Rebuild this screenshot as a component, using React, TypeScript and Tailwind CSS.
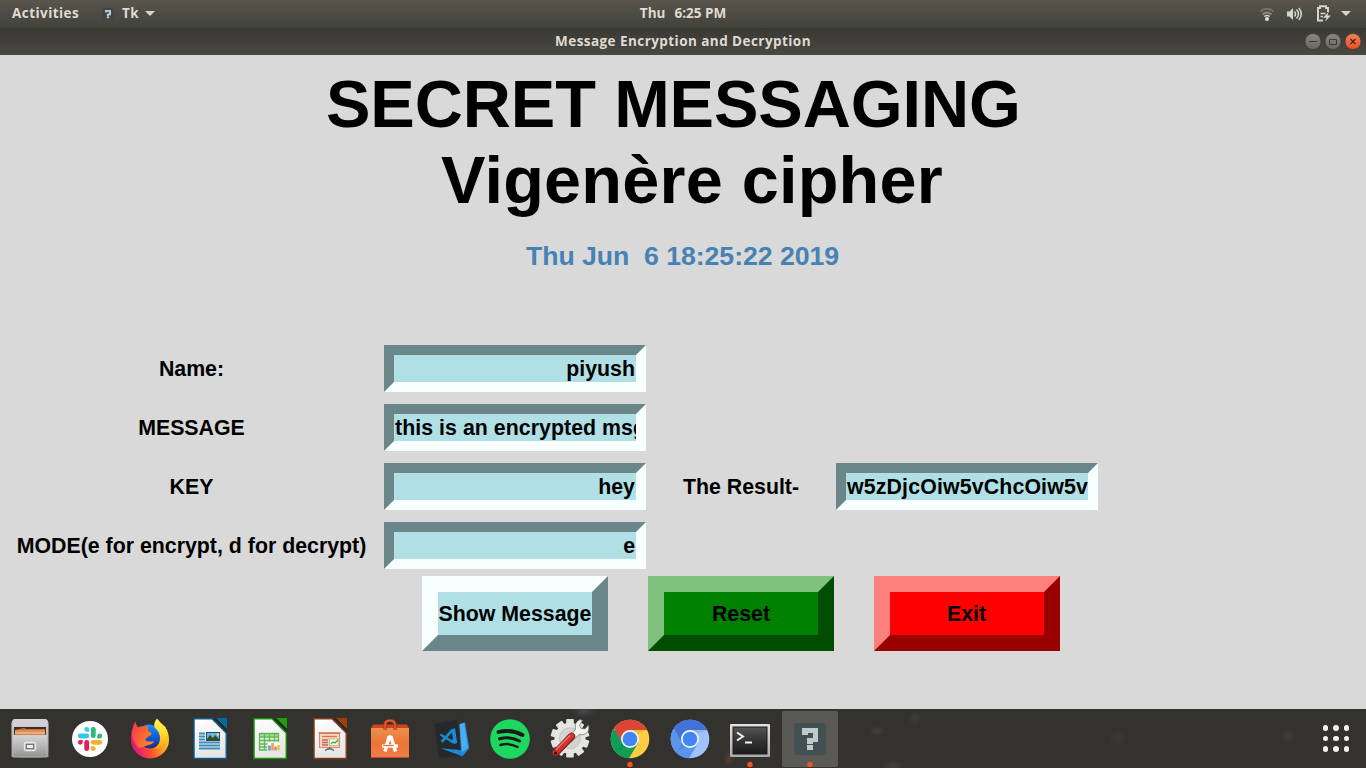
import React from 'react';

const systemFont = "font-['Open_Sans','Noto_Sans',sans-serif]";

function Caret({ className = '' }: { className?: string }) {
  return (
    <svg className={className} width="10" height="5" viewBox="0 0 10 5">
      <path d="M0 0h10L5 5z" fill="#d6d4cf" />
    </svg>
  );
}

function Unknown({ size }: { size: number }) {
  return (
    <svg width={size} height={size} viewBox="0 0 32 32">
      <rect width="32" height="32" rx="4" fill="#3b4749" />
      <path d="M8 5h16v14h-5v2h-6v-6h5v-5h-4v2H8zM13 22h6v5h-6z" fill="#c0cacc" />
    </svg>
  );
}

function TopBar() {
  return (
    <header className={`grid h-7 grid-cols-3 items-center bg-linear-to-b from-[#58554c] to-[#42413b] pb-px text-[13.5px] font-bold text-[#dfdbd2] ${systemFont}`}>
      <div className="flex items-center pl-3">
        <span className="w-[90px] tracking-[0.45px]">Activities</span>
        <Unknown size={12} />
        <span className="ml-2 w-[23px] tracking-[0.4px]">Tk</span>
        <Caret />
      </div>
      <div className="flex justify-center gap-[9px]">
        <span>Thu</span>
        <span>6:25 PM</span>
      </div>
      <div className="flex items-center justify-end pr-[15px]">
        <svg width="14" height="14" viewBox="0 0 14 14" fill="none" strokeWidth="1.9">
          <path d="M.5 4.500Q7-.8 13.500 4.500" stroke="#77746c" />
          <path d="M2.500 7.500Q7 3.500 11.500 7.500" stroke="#8d8a81" />
          <path d="M4.300 9.500Q7 7.500 9.700 9.500" stroke="#d6d4cf" strokeWidth="1.300" />
          <circle cx="7" cy="12" r="2" fill="#e0ded8" />
        </svg>
        <svg className="ml-[12px]" width="17" height="14" viewBox="0 0 17 14" fill="none" stroke="#d6d4cf">
          <path d="M1 4.500h2.500L7 1v12L3.500 9.500H1z" fill="#d6d4cf" stroke="none" />
          <path d="M8.500 4.500q2 2.500 0 5M10.500 2.500q4 4.500 0 9M12.800 1q5 6 0 12" strokeWidth="1.500" />
        </svg>
        <svg className="ml-[13px]" width="16" height="17" viewBox="0 0 16 17" fill="none" stroke="#d6d4cf">
          <path d="M7 15.500H2V3h2V1.200h6V3h2v4" strokeWidth="2" />
          <path d="M4.500 8.500h5M4.500 11.500h2.500" strokeWidth="1.400" />
          <path d="M12.500 7L7 12.800h3.500L9 16.500l6-6h-3.500z" fill="#d6d4cf" stroke="none" />
        </svg>
        <Caret className="ml-[9px]" />
      </div>
    </header>
  );
}

function TitleBar() {
  return (
    <div className={`grid h-[27px] grid-cols-[1fr_auto_1fr] items-center bg-linear-to-b from-[#393933] to-[#4b4842] ${systemFont}`}>
      <span />
      <h2 className="pb-px text-[13.5px] font-bold tracking-[0.44px] text-[#dfdbd2]">Message Encryption and Decryption</h2>
      <svg className="mr-[4px] justify-self-end" width="58" height="18" viewBox="0 0 58 18" fill="none">
        <defs>
          <linearGradient id="grayButton" x2="0" y2="1">
            <stop stopColor="#8b887f" />
            <stop offset="1" stopColor="#68665f" />
          </linearGradient>
          <linearGradient id="closeButton" x2="0" y2="1">
            <stop stopColor="#f5815d" />
            <stop offset="1" stopColor="#e6501e" />
          </linearGradient>
        </defs>
        <circle cx="9" cy="8.500" r="8" fill="url(#grayButton)" stroke="#33322e" strokeWidth=".6" />
        <circle cx="29" cy="8.500" r="8" fill="url(#grayButton)" stroke="#33322e" strokeWidth=".6" />
        <circle cx="49" cy="8.500" r="8" fill="url(#closeButton)" stroke="#33322e" strokeWidth=".6" />
        <path d="M5 8.500h8M25.500 6.500h7v5h-7z" stroke="#3c3b37" />
        <path d="M46.500 6l5 5M51.500 6l-5 5" stroke="#4a251a" strokeWidth="1.300" />
      </svg>
    </div>
  );
}

function Label({ children, shifted }: { children: React.ReactNode; shifted?: boolean }) {
  return <label className={`pt-[2px] text-center whitespace-pre ${shifted ? '' : 'pr-px'}`}>{children}</label>;
}

function Entry({ value, align = 'right', tracking = '' }: { value: string; align?: 'left' | 'right'; tracking?: string }) {
  return (
    <div className="h-[47px] border-10 border-t-[#6a8689] border-r-[#f7ffff] border-b-[#f7ffff] border-l-[#6a8689] bg-[#b0e0e6]">
      <div className={`h-[27px] overflow-hidden px-px leading-[29px] whitespace-nowrap ${tracking} ${align === 'right' ? 'text-right' : 'text-left'}`}>{value}</div>
    </div>
  );
}

function BevelButton({ children, tone }: { children: string; tone: string }) {
  return (
    <button className={`flex h-[75px] w-[186px] items-center justify-center border-16 pt-[2px] whitespace-nowrap ${tone}`}>
      {children}
    </button>
  );
}

function CipherForm() {
  return (
    <main className="h-[654px] bg-[#d9d9d9] pt-[11px] font-['Liberation_Sans',Arial,sans-serif] text-[21.333px] font-bold text-black">
      <h1 className="text-[66.667px] leading-[76px] whitespace-pre">
        <span className="block pl-[326px] tracking-[-0.1px]">SECRET MESSAGING</span>
        <span className="block pl-[441px] tracking-[0.2px]">Vigenère cipher</span>
      </h1>
      <p className="mt-[23px] pr-px text-center text-[26.667px] leading-[30px] tracking-[-0.04px] whitespace-pre text-[#4682b4]">Thu Jun  6 18:25:22 2019</p>
      <div className="mt-[74px] grid grid-cols-[384px_262px_190px_262px] items-center gap-y-3">
        <Label>Name:</Label>
        <Entry value="piyush" />
        <span className="col-span-2" />
        <Label>MESSAGE</Label>
        <Entry value="this is an encrypted msg" align="left" tracking="tracking-[0.04px]" />
        <span className="col-span-2" />
        <Label>KEY</Label>
        <Entry value="hey" />
        <Label shifted>The Result-</Label>
        <Entry value="w5zDjcOiw5vChcOiw5v" align="left" tracking="tracking-[0.14px]" />
        <Label>MODE(e for encrypt, d for decrypt)</Label>
        <Entry value="e" />
      </div>
      <div className="mt-[7px] flex gap-10 pl-[422px]">
        <BevelButton tone="border-t-[#f7ffff] border-r-[#6a8689] border-b-[#6a8689] border-l-[#f7ffff] bg-[#b0e0e6]">Show Message</BevelButton>
        <BevelButton tone="border-t-[#7fc07f] border-r-[#004c00] border-b-[#004c00] border-l-[#7fc07f] bg-[#008000]">Reset</BevelButton>
        <BevelButton tone="border-t-[#ff7f7f] border-r-[#990000] border-b-[#990000] border-l-[#ff7f7f] bg-[#ff0000] pr-px">Exit</BevelButton>
      </div>
    </main>
  );
}

function DockItem({ children, running, active }: { children: React.ReactNode; running?: boolean; active?: boolean }) {
  return (
    <svg width="60" height="59" viewBox="0 0 60 59" fill="none">
      {active && <rect x="2" y="2" width="56" height="56" rx="2" fill="#5a5955" />}
      {children}
      {running && <circle cx="30" cy="55.500" r="2.700" fill="#f25420" />}
    </svg>
  );
}

function Sheet({ id, color, fold }: { id: string; color: string; fold: string }) {
  return (
    <>
      <defs>
        <linearGradient id={id} x2=".3" y2="1">
          <stop stopColor="#fff" />
          <stop offset="1" stopColor="#e6e6e6" />
        </linearGradient>
      </defs>
      <path d="M14 9.700h18L46.300 24v25.500H14z" fill={`url(#${id})`} stroke={color} strokeWidth="1.500" />
      <path d="M36 9h11v11z" fill={fold} />
      <path d="M33 9h3l11 11v3.500z" fill="#292a26" />
    </>
  );
}

function Files() {
  return (
    <DockItem>
      <defs>
        <linearGradient id="cabinet" x2="0" y2="1">
          <stop stopColor="#d4d3d5" />
          <stop offset=".5" stopColor="#b9b8b8" />
          <stop offset="1" stopColor="#929291" />
        </linearGradient>
      </defs>
      <path d="M14 10h32q2 1 2.500 4v34q-18 1-37 0V14q.5-3 2.500-4z" fill="url(#cabinet)" />
      <path d="M14 11h32l2 6H12z" fill="#d3cfd4" />
      <path d="M14 18h32v8H14z" fill="#38322e" />
      <path d="M15 21l9-2 2 1h19v6H15z" fill="#d36a28" />
      <path d="M15 22h30" stroke="#f4b06d" />
      <path d="M15 24h30" stroke="#fff0d6" />
      <path d="M13 26h34v22H13z" fill="url(#cabinet)" stroke="#c8c8c8" strokeWidth=".6" />
      <rect x="24.500" y="33.500" width="11" height="8" rx="1.500" fill="#aaa" stroke="#e8e8e8" strokeWidth="1.300" />
      <rect x="26.500" y="35.500" width="7" height="4" fill="#eee" stroke="#777" />
    </DockItem>
  );
}

function Slack() {
  return (
    <DockItem>
      <circle cx="30" cy="30" r="18" fill="#fff" />
      <g strokeWidth="4.800" strokeLinecap="round">
        <path d="M20.300 27h6.400" stroke="#36c5f0" />
        <path d="M33.300 20.300v6.400" stroke="#2eb67d" />
        <path d="M33.300 33.300h6.400" stroke="#ecb22e" />
        <path d="M26.700 33.300v6.400" stroke="#e01e5a" />
      </g>
      <path d="M29.100 22.700h-2.400a2.400 2.400 0 1 1 2.400-2.400z" fill="#36c5f0" />
      <path d="M37.300 29.400V27a2.400 2.400 0 1 1 2.400 2.400z" fill="#2eb67d" />
      <path d="M30.900 37.300h2.400a2.400 2.400 0 1 1-2.400 2.400z" fill="#ecb22e" />
      <path d="M22.700 30.900v2.400a2.400 2.400 0 1 1-2.400-2.400z" fill="#e01e5a" />
    </DockItem>
  );
}

function Firefox() {
  return (
    <DockItem>
      <defs>
        <linearGradient id="foxBody" x1="1" y1=".2" x2=".05" y2=".5">
          <stop stopColor="#ffd52f" />
          <stop offset=".3" stopColor="#ffa421" />
          <stop offset=".65" stopColor="#ff5030" />
          <stop offset="1" stopColor="#e01b7a" />
        </linearGradient>
        <linearGradient id="globe" x2="0" y2="1">
          <stop stopColor="#1a94e8" />
          <stop offset=".5" stopColor="#0b62dc" />
          <stop offset="1" stopColor="#1b2f9c" />
        </linearGradient>
        <linearGradient id="foxHead" x2="1" y2=".6">
          <stop stopColor="#f9324c" />
          <stop offset="1" stopColor="#ff8a22" />
        </linearGradient>
        <linearGradient id="foxFlame" x2="0" y2="1">
          <stop stopColor="#fff45c" />
          <stop offset=".5" stopColor="#ffdb2e" />
          <stop offset="1" stopColor="#ff9a1e" />
        </linearGradient>
      </defs>
      <circle cx="29" cy="27" r="11.500" fill="url(#globe)" />
      <path d="M15.500 13Q10.500 21 11 31A19 18.500 0 0 0 49 31Q49 23 45 18L40 24Q43 38 30 39.500 21 39 19 30z" fill="url(#foxBody)" />
      <path d="M15.500 13Q16 16.500 18 18.500 21 16.500 24 17.500L29 16.800Q27 19.500 28 22L31.500 24Q31.500 26.500 27.500 28L25 31Q28 33.500 34 32 33 35.500 28 36 24 38 19 39 10 30 12.500 21 13 16.500 15.500 13z" fill="url(#foxHead)" />
      <path d="M37 9.500Q33.500 13 34.500 18.500 39.500 22 40 29 40 36 34 39.500 44 41 47 33 49.500 25 45 17.500 43 16 40.500 13.500z" fill="url(#foxFlame)" />
    </DockItem>
  );
}

function Writer() {
  return (
    <DockItem>
      <Sheet id="writerPage" color="#0c5d91" fold="#0369a3" />
      <path d="M19 24.500h6M19 27.500h6M19 30.500h6M19 33.500h21M19 36.500h21M19 39.500h21" stroke="#3c8fbd" strokeWidth="1.900" />
      <rect x="26.500" y="23.500" width="13" height="8" fill="#69b7e7" stroke="#224b60" />
      <path d="M27 30l3-4 3 3 2-3 4 4v1.500H27z" fill="#354e28" />
      <circle cx="38" cy="25.500" r="1.200" fill="#ffe45b" />
    </DockItem>
  );
}

function Calc() {
  return (
    <DockItem>
      <Sheet id="calcPage" color="#159304" fold="#18a303" />
      <rect x="19" y="24" width="20" height="17" fill="#dff5d7" />
      <path d="M19 24h20v3.500H19z" fill="#a5db98" />
      <path d="M19 24.500h20M19 28h20M19 31.500h20M19 35h20M19 38h20M19 41h20M19.500 24v17M24.500 24v17M29.500 24v17M34.500 24v17M38.500 24v17" stroke="#62b653" strokeWidth="1.300" />
      <rect x="27.500" y="33" width="13" height="9" fill="#fff" stroke="#ddd" strokeWidth=".6" />
      <path d="M29.500 41.500v-5" stroke="#579fd8" strokeWidth="2.600" />
      <path d="M32.500 41.500v-7.500" stroke="#f59b44" strokeWidth="2.600" />
      <path d="M35.500 41.500v-4" stroke="#b590a5" strokeWidth="2.600" />
      <path d="M38.500 41.500v-5.500" stroke="#edc52c" strokeWidth="2.600" />
    </DockItem>
  );
}

function Impress() {
  return (
    <DockItem>
      <Sheet id="impressPage" color="#883b15" fold="#a33e03" />
      <rect x="19.500" y="24.500" width="20" height="14" fill="#fbd3c0" stroke="#d48b6e" />
      <path d="M18.500 24h22" stroke="#cf7852" strokeWidth="1.600" />
      <path d="M22 27.500h15" stroke="#cf7852" strokeWidth="1.300" />
      <path d="M22 31h6M22 33.500h6M22 36h6" stroke="#b96d50" strokeWidth="1.500" />
      <rect x="29.500" y="30" width="8.500" height="6.500" fill="#f8fff3" stroke="#a2b28d" strokeWidth=".8" />
      <path d="M31 35l2-2 2 1 3-3" stroke="#41a832" strokeWidth="1.300" />
      <path d="M29.500 38v2M25 41.500q4.500-3.500 9 0" stroke="#666" strokeWidth="1.500" />
    </DockItem>
  );
}

function Software() {
  return (
    <DockItem>
      <defs>
        <linearGradient id="bag" x2="0" y2="1">
          <stop stopColor="#e99150" />
          <stop offset=".5" stopColor="#ef7435" />
          <stop offset="1" stopColor="#ef7c4a" />
        </linearGradient>
      </defs>
      <path d="M13 15.500h34l2 4v29H11v-29z" fill="#cf451a" />
      <path d="M11 19h38v29.500H11z" fill="url(#bag)" />
      <path d="M11 48.500h38" stroke="#b74d23" />
      <path d="M25 21v-5q0-4.500 5-4.500t5 4.500v5" stroke="#b53614" strokeWidth="3.200" />
      <path d="M25 21v-5q0-4.500 5-4.500t5 4.500v5" stroke="#e66036" strokeWidth="1.400" />
      <path d="M25 42.500L29 28h2l4.500 14.500" stroke="#fff" strokeWidth="3.600" strokeLinejoin="bevel" />
      <path d="M22 37h16" stroke="#fff" strokeWidth="3.400" />
      <path d="M23 36.500h11" stroke="#ef7638" strokeWidth="1.300" />
    </DockItem>
  );
}

function Code() {
  return (
    <DockItem>
      <path d="M14.700 15L37 10.500l4 36-20 2.300q-2 0-2.300-2z" fill="#25282c" />
      <path d="M20.700 39.300L40 41l4.500 1.800-2.300 4.400z" fill="#1a8bd6" />
      <path d="M39.500 15.300L45 13.300 49.200 39l-6.500 8.200-1.700-6z" fill="#1d8fdb" />
      <path d="M39.500 15.300l4.700-1.500L48 39l-6 4z" fill="#48aef0" />
      <path d="M20.500 25.500l13 8M21.500 33L32.500 21" stroke="#1a86cc" strokeWidth="2.600" />
      <path d="M31.500 20.500l3.500-1.500 2.200 15-3.200 1-4-3 3-2z" fill="#1a8bd6" />
    </DockItem>
  );
}

function Spotify() {
  return (
    <DockItem>
      <circle cx="30" cy="30" r="19.800" fill="#1ed760" />
      <g stroke="#171c18" strokeLinecap="round">
        <path d="M18.500 23q13-3 24 3" strokeWidth="3.800" />
        <path d="M19.500 29.800q10.500-3 20 2.200" strokeWidth="3.100" />
        <path d="M20.500 36q9-2.500 17 2" strokeWidth="2.500" />
      </g>
    </DockItem>
  );
}

function Settings() {
  const spokes = [0, 36, 72, 108, 144];
  return (
    <DockItem>
      {spokes.map((angle) => (
        <rect key={angle} x="26.200" y="10" width="7.600" height="38.600" rx=".8" fill="#e3e3e1" transform={`rotate(${angle} 30 29.300)`} />
      ))}
      <circle cx="30" cy="29.300" r="15.500" fill="#e5e5e3" />
      <circle cx="30" cy="29.300" r="10.500" fill="#d5d4d2" stroke="#c4c3c0" />
      <circle cx="30" cy="29.300" r="4.500" fill="#b5b4b1" />
      <path d="M31 26l4.500-6q-1.500-6.500 4.500-9.500l2.500 1-3 4.500 1.500 3.500 4 .5 3.500-4q1.500 6.500-3.500 9-3 1.500-6 .5l-5 5z" fill="#f3f3f1" stroke="#777773" strokeWidth=".8" />
      <path d="M15.500 44L31.500 27.500" stroke="#881b19" strokeWidth="7.500" strokeLinecap="round" />
      <path d="M15.500 43.500L31.500 27" stroke="#cc3430" strokeWidth="5.500" strokeLinecap="round" />
      <path d="M16 40.500l14-14" stroke="#ed766b" strokeWidth="1.300" />
      <circle cx="15.500" cy="44" r="1.700" fill="#431713" />
    </DockItem>
  );
}

function Browser({ red, green, yellow, running }: { red: string; green: string; yellow: string; running?: boolean }) {
  return (
    <DockItem running={running}>
      <circle cx="30" cy="30" r="19.300" fill={yellow} />
      <path d="M13.300 20.300A19.300 19.300 0 0 0 29 49.300L38.500 33.500 30 30z" fill={green} />
      <path d="M13.900 19.300A19.300 19.300 0 0 1 47.100 21H30a9 9 0 0 0-8.400 12z" fill={red} />
      <path d="M30 21h17l-10 4zM22 34l5 4-10 4z" fill="#000" opacity=".07" />
      <circle cx="30" cy="30" r="9" fill="#f4f6f7" />
      <circle cx="30" cy="30" r="7.300" fill="#4285f4" />
    </DockItem>
  );
}

function Terminal() {
  return (
    <DockItem running>
      <defs>
        <linearGradient id="terminalFrame" x2="0" y2="1">
          <stop stopColor="#e4e2e5" />
          <stop offset="1" stopColor="#aaa8aa" />
        </linearGradient>
        <linearGradient id="terminalScreen" x2="0" y2="1">
          <stop stopColor="#555" />
          <stop offset=".5" stopColor="#343434" />
          <stop offset="1" stopColor="#1c1c1c" />
        </linearGradient>
      </defs>
      <rect x="10" y="15" width="40" height="33" rx="1" fill="url(#terminalFrame)" />
      <rect x="13" y="18" width="34" height="27" fill="url(#terminalScreen)" stroke="#1d1d1d" />
      <path d="M17 23.500l6 4-6 4M25 33.500h7" stroke="#f3f3f3" strokeWidth="2" />
    </DockItem>
  );
}

function Dock() {
  return (
    <nav className="flex h-[59px] items-center justify-between bg-[#33322e] bg-[radial-gradient(ellipse_9px_6px_at_877px_22px,#403f3a,transparent),radial-gradient(ellipse_7px_8px_at_915px_9px,#3f3d38,transparent),radial-gradient(ellipse_12px_6px_at_893px_57px,#42403b,transparent),radial-gradient(ellipse_9px_8px_at_1288px_27px,#3e3e39,transparent),radial-gradient(ellipse_10px_8px_at_1118px_29px,#3b3b36,transparent),radial-gradient(ellipse_6px_8px_at_729px_49px,#553f33,transparent),radial-gradient(ellipse_13px_6px_at_584px_2px,#454a47,transparent)]">
      <div className="flex">
        <Files />
        <Slack />
        <Firefox />
        <Writer />
        <Calc />
        <Impress />
        <Software />
        <Code />
        <Spotify />
        <Settings />
        <Browser red="#db4437" green="#0f9d58" yellow="#ffcd40" running />
        <Browser red="#4272d7" green="#5b94ed" yellow="#a1c2fa" />
        <Terminal />
        <DockItem running active>
          <rect x="14" y="14" width="32" height="32" rx="4" fill="#435052" />
          <path d="M22 19h16v14h-5v2h-6v-6h6v-5h-5v2h-6zM27 36h6v5h-6z" fill="#c0cacc" />
        </DockItem>
      </div>
      <div className="mr-[17px] grid grid-cols-3 gap-[5px]">
        {Array.from({ length: 9 }, (_, index) => (
          <span key={index} className="size-[5.500px] rounded-full bg-[#f1f1ef]" />
        ))}
      </div>
    </nav>
  );
}

export default function App() {
  return (
    <div className="h-[768px] w-[1366px] overflow-hidden">
      <TopBar />
      <TitleBar />
      <CipherForm />
      <Dock />
    </div>
  );
}
